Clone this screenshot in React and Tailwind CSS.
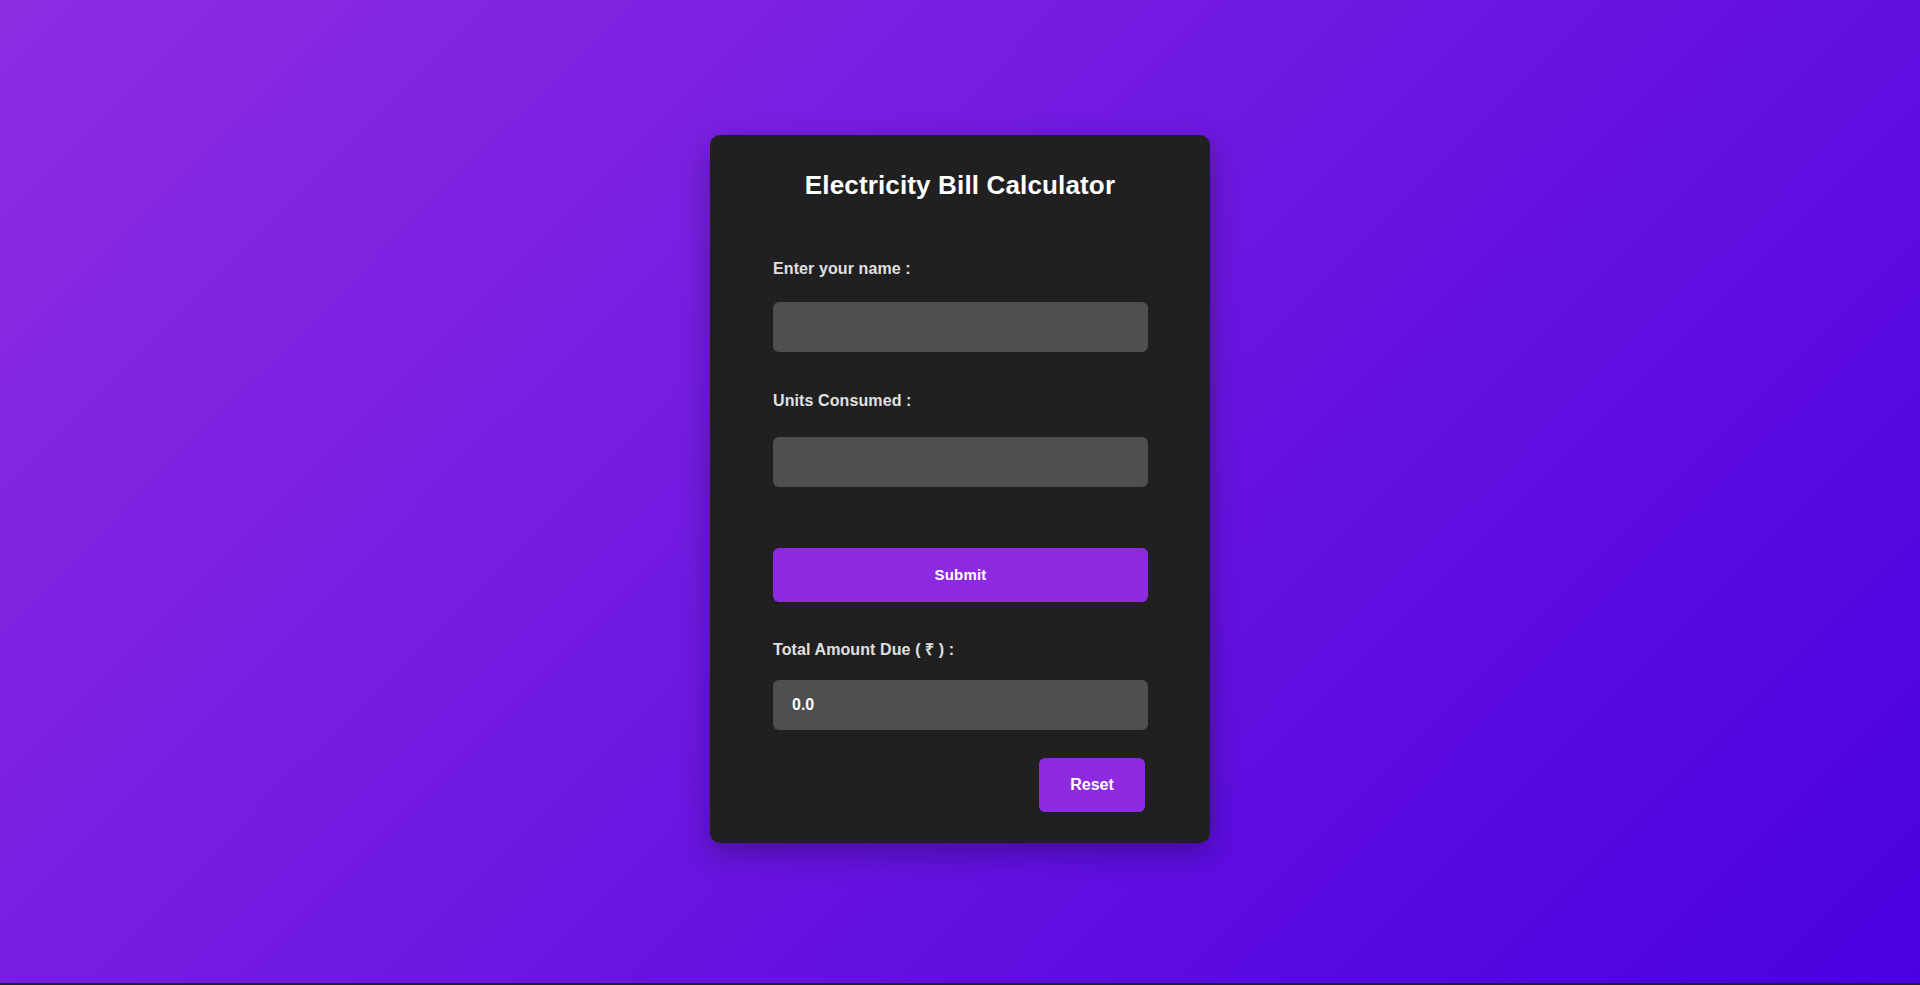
export default function App() {
  const font = { fontFamily: '"Liberation Sans", Arial, sans-serif' };
  return (
    <div className="bg-[#222222] min-h-[985px]" style={font}>
      <div className="h-[983px] bg-[linear-gradient(135deg,#8e2de2,#4a00e0)] flex justify-center pt-[135px]">
        <div className="w-[500px] h-[708px] bg-[#202020] rounded-[10px] shadow-[0_10px_30px_rgba(0,0,0,0.3)] flex flex-col px-[63px] pt-[35px] pb-[31px]">
          <h1 className="text-[26px] leading-[30px] font-bold text-white text-center tracking-[0.15px]">
            Electricity Bill Calculator
          </h1>
          <label className="mt-[60px] text-[16px] leading-[18px] font-bold text-[#e0e0e0] tracking-[0.1px]">
            Enter your name :
          </label>
          <input
            type="text"
            className="mt-[24px] h-[50px] w-[375px] rounded-md bg-[#4f4f4f] outline-none px-[19px] text-white font-bold text-[16px]"
          />
          <label className="mt-[40px] text-[16px] leading-[18px] font-bold text-[#e0e0e0] tracking-[0.1px]">
            Units Consumed :
          </label>
          <input
            type="text"
            className="mt-[27px] h-[50px] w-[375px] rounded-md bg-[#4f4f4f] outline-none px-[19px] text-white font-bold text-[16px]"
          />
          <button className="mt-[61px] h-[54px] w-[375px] rounded-md bg-[#8d2ae0] text-white font-bold text-[15px] tracking-[0.2px]">
            Submit
          </button>
          <label className="mt-[39px] text-[16px] leading-[18px] font-bold text-[#e0e0e0] tracking-[0.1px]">
            Total Amount Due ( ₹ ) :
          </label>
          <input
            type="text"
            readOnly
            value="0.0"
            className="mt-[21px] h-[50px] w-[375px] rounded-md bg-[#4f4f4f] outline-none px-[19px] text-white font-bold text-[16px]"
          />
          <div className="mt-[28px] flex justify-end pr-[2px]">
            <button className="h-[54px] w-[106px] rounded-md bg-[#8d2ae0] text-white font-bold text-[16px]">
              Reset
            </button>
          </div>
        </div>
      </div>
    </div>
  );
}
